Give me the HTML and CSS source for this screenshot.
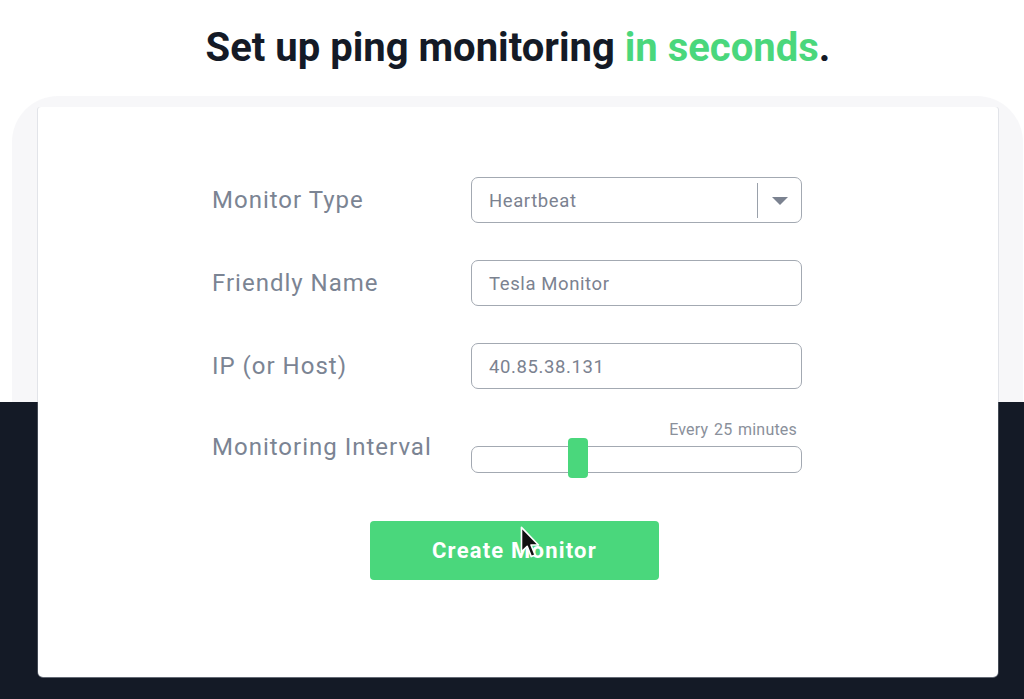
FILE: index.html
```html
<!DOCTYPE html>
<html>
<head>
<meta charset="utf-8">
<link rel="stylesheet" href="styles.css">
</head>
<body>
<h1 class="title">Set up ping monitoring <span class="accent">in seconds</span>.</h1>
<section class="stage">
  <div class="frame">
    <div class="card">
      <div class="form">
        <div class="row">
          <div class="label">Monitor Type</div>
          <div class="field select">
            <span class="value">Heartbeat</span>
            <span class="divider"></span>
            <span class="caret"></span>
          </div>
        </div>
        <div class="row">
          <div class="label">Friendly Name</div>
          <div class="field"><span class="value">Tesla Monitor</span></div>
        </div>
        <div class="row">
          <div class="label">IP (or Host)</div>
          <div class="field"><span class="value">40.85.38.131</span></div>
        </div>
        <div class="row row-interval">
          <div class="label">Monitoring Interval</div>
          <div class="slider">
            <div class="slider-note">Every 25 minutes</div>
            <div class="track"><span class="thumb"></span></div>
          </div>
        </div>
      </div>
      <div class="actions">
        <div class="button">Create Monitor
          <svg class="cursor" width="22" height="34" viewBox="0 0 16 25">
            <path d="M1 1 L1 19 L5.2 15 L8.2 22.5 L11 21.3 L8 14 L13.5 14 Z" fill="#111" stroke="#fff" stroke-width="1.2" stroke-linejoin="round"/>
          </svg>
        </div>
      </div>
    </div>
  </div>
</section>
</body>
</html>
```
FILE: styles.css
```css
html, body {
  margin: 0;
  padding: 0;
  background: #ffffff;
  font-family: Roboto, "Liberation Sans", sans-serif;
}
body {
  width: 1024px;
  height: 699px;
  overflow: hidden;
}
.title {
  margin: 0;
  padding-top: 24px;
  padding-left: 12px;
  height: 96px;
  box-sizing: border-box;
  text-align: center;
  font-size: 40px;
  font-weight: 700;
  color: #141a26;
  letter-spacing: 0;
  line-height: 48px;
}
.accent { color: #4ad77c; }
.stage {
  height: 603px;
  background: linear-gradient(to bottom, #ffffff 0, #ffffff 306px, #141a26 306px);
}
.frame {
  margin: 0 1px 0 12px;
  padding: 11px 25px 0 26px;
  border-radius: 46px 46px 0 0;
  background: linear-gradient(to bottom, #f7f7f9 0, #f7f7f9 306px, transparent 306px);
}
.card {
  height: 570px;
  box-sizing: border-box;
  background: #ffffff;
  border-radius: 3px 3px 5px 5px;
  box-shadow: 0 1px 0 0 rgba(180,185,195,0.5), 1px 0 0 0 rgba(180,185,195,0.3), -1px 0 0 0 rgba(180,185,195,0.3);
  padding-top: 70px;
}
.form {
  margin-left: 174px;
  width: 591px;
  display: flex;
  flex-direction: column;
}
.row {
  display: grid;
  grid-template-columns: 259px 331px;
  align-items: center;
  margin-bottom: 37px;
}
.row-interval { margin-top: -6px; margin-bottom: 0; }
.label {
  font-size: 24px;
  letter-spacing: 1px;
  color: #7b8493;
  line-height: 28px;
}
.field {
  height: 46px;
  box-sizing: border-box;
  border: 1.5px solid #a3a9b2;
  border-radius: 7px;
  display: flex;
  align-items: center;
  padding-left: 17px;
  background: #fff;
}
.value {
  font-size: 18.5px;
  letter-spacing: 0.6px;
  color: #7b8290;
  flex: 1;
  padding-top: 2px;
}
.divider {
  width: 1.5px;
  height: 35px;
  background: #9aa1ab;
}
.caret {
  width: 0;
  height: 0;
  border-left: 8px solid transparent;
  border-right: 8px solid transparent;
  border-top: 8px solid #7b8290;
  margin: 2px 13px 0 14px;
}
.slider {
  display: flex;
  flex-direction: column;
}
.slider-note {
  text-align: right;
  font-size: 16px;
  letter-spacing: 0.2px;
  word-spacing: 1.5px;
  color: #8a909b;
  line-height: 20px;
  padding-right: 5px;
  margin-bottom: 6px;
}
.track {
  position: relative;
  height: 27px;
  box-sizing: border-box;
  border: 1.5px solid #a3a9b2;
  border-radius: 7px;
  background: #fff;
}
.thumb {
  position: absolute;
  left: 96px;
  top: -9px;
  width: 20px;
  height: 40px;
  border-radius: 4px;
  background: #4ad77c;
}
.actions {
  padding-left: 332px;
  margin-top: 48px;
}
.button {
  position: relative;
  width: 289px;
  height: 59px;
  border-radius: 4px;
  background: #4ad77c;
  color: #ffffff;
  font-size: 22px;
  letter-spacing: 1.2px;
  font-weight: 700;
  display: flex;
  align-items: center;
  justify-content: center;
}
.cursor {
  position: absolute;
  left: 150px;
  top: 5px;
}
```
